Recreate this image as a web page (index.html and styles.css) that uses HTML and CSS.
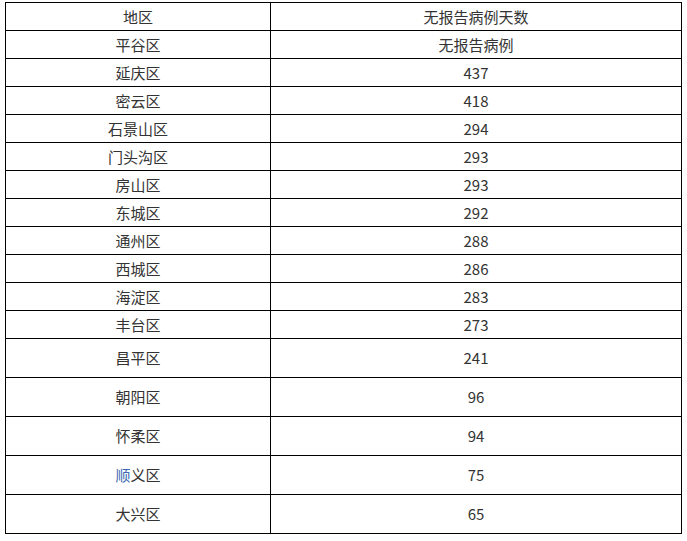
FILE: index.html
```html
<!DOCTYPE html>
<html lang="zh-CN">
<head>
<meta charset="utf-8">
<title>无报告病例天数</title>
<link rel="stylesheet" href="styles.css">
</head>
<body>
<table class="data">
  <colgroup><col class="c1"><col class="c2"></colgroup>
  <tbody>
    <tr><td>地区</td><td>无报告病例天数</td></tr>
    <tr><td>平谷区</td><td>无报告病例</td></tr>
    <tr><td>延庆区</td><td>437</td></tr>
    <tr><td>密云区</td><td>418</td></tr>
    <tr><td>石景山区</td><td>294</td></tr>
    <tr><td>门头沟区</td><td>293</td></tr>
    <tr><td>房山区</td><td>293</td></tr>
    <tr><td>东城区</td><td>292</td></tr>
    <tr><td>通州区</td><td>288</td></tr>
    <tr><td>西城区</td><td>286</td></tr>
    <tr><td>海淀区</td><td>283</td></tr>
    <tr><td>丰台区</td><td>273</td></tr>
    <tr class="tall"><td>昌平区</td><td>241</td></tr>
    <tr class="tall"><td>朝阳区</td><td>96</td></tr>
    <tr class="tall"><td>怀柔区</td><td>94</td></tr>
    <tr class="tall"><td><span class="link">顺</span>义区</td><td>75</td></tr>
    <tr class="tall"><td>大兴区</td><td>65</td></tr>
  </tbody>
</table>
</body>
</html>
```
FILE: styles.css
```css
html, body {
  margin: 0;
  padding: 0;
  background: #fff;
}
body {
  padding: 2px 0 0 5px;
  font-family: "Noto Sans CJK SC", "Noto Sans", sans-serif;
  font-size: 15px;
  color: #333;
}
.data {
  border-collapse: collapse;
  table-layout: fixed;
  width: 676px;
}
.c1 { width: 265px; }
.c2 { width: 411px; }
.data td {
  border: 1px solid #000;
  padding: 0;
  height: 27px;
  text-align: center;
  vertical-align: middle;
  line-height: 18px;
}
.data tr.tall td {
  height: 38px;
}
.link {
  color: #3b69b0;
}
```
